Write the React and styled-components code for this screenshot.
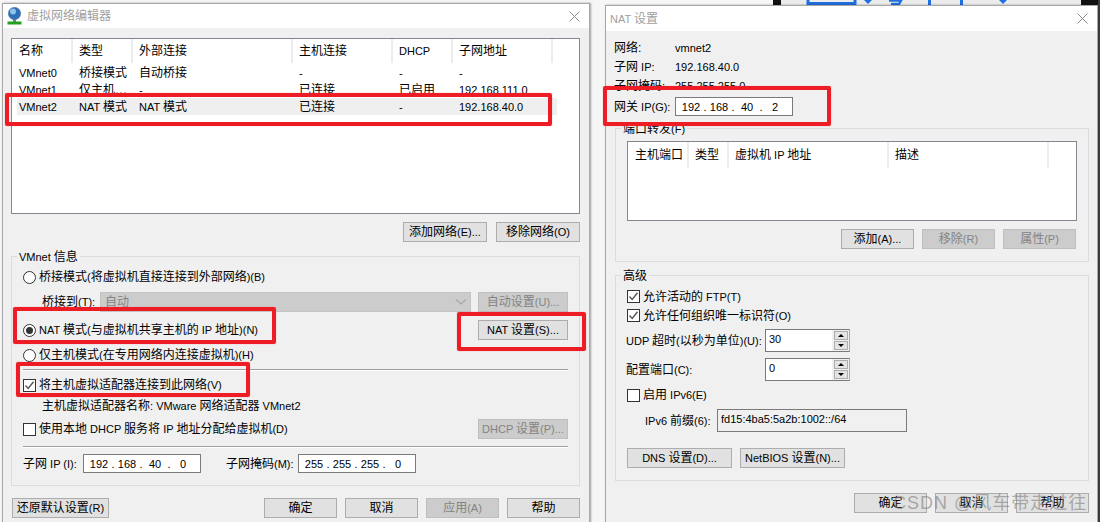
import React from 'react';
import styled, { createGlobalStyle } from 'styled-components';

const GlobalStyle = createGlobalStyle`
  html, body {
    margin: 0;
    padding: 0;
    background: #f4f4f4;
  }
  * {
    box-sizing: border-box;
  }
`;

const Desktop = styled.div`
  position: relative;
  width: 1100px;
  height: 522px;
  overflow: hidden;
  background: #f6f6f6;
  color: #000;
  font: 12px/16px "Liberation Sans", "Noto Sans CJK SC", sans-serif;
`;

// the dialogs set latin text a size below the chinese text
const Latin = styled.span`
  font-size: 11px;
`;

const T = ({ children }) => (
  <>
    {children.split(/([\x20-\x7e]+)/).map((run, i) => (
      i % 2 ? <Latin key={i}>{run}</Latin> : run
    ))}
  </>
);

const TopStrip = styled.svg`
  position: absolute;
  left: 773px;
  top: 0;
`;

const RightEdge = styled.div`
  position: absolute;
  left: 1098px;
  top: 0;
  width: 2px;
  height: 522px;
  background: #3a3a3a;
`;

const Window = styled.div`
  position: absolute;
  left: ${(p) => p.$left}px;
  top: ${(p) => p.$top}px;
  width: ${(p) => p.$width}px;
  height: ${(p) => p.$height}px;
  display: flex;
  flex-direction: column;
  background: #f0f0f0;
  border: 1px solid #a8a8a8;
  box-shadow: 1px 0 2px rgba(0, 0, 0, 0.35);
`;

const TitleBar = styled.div`
  display: flex;
  align-items: center;
  flex: none;
  height: ${(p) => p.$height}px;
  padding: 0 9px 0 ${(p) => p.$pad}px;
  background: #fff;
`;

const TitleText = styled.span`
  flex: 1;
  color: #a0a0a0;
  margin-left: ${(p) => p.$gap || 0}px;
`;

const WindowBody = styled.div`
  display: flex;
  flex-direction: column;
  padding: ${(p) => p.$pad};
`;

const ListBox = styled.div`
  height: ${(p) => p.$height}px;
  flex: none;
  background: #fff;
  border: 1px solid #828790;
`;

const ListRow = styled.div`
  display: grid;
  grid-template-columns: ${(p) => p.$cols};
  align-items: center;
`;

const HeaderRow = styled(ListRow)`
  height: ${(p) => p.$h}px;
  margin-bottom: 1px;
`;

const HeaderCell = styled.div`
  height: 100%;
  line-height: ${(p) => p.$line || 24}px;
  padding-left: ${(p) => p.$pad || 6}px;
  border-right: 2px solid #ececec;
  white-space: nowrap;
`;

const DataRow = styled(ListRow)`
  height: 17px;
  width: 540px;
  margin-left: 5px;
  background: ${(p) => (p.$selected ? '#efefef' : 'transparent')};
`;

const DataCell = styled.div`
  padding-left: ${(p) => p.$pad || 6}px;
  white-space: nowrap;
`;

const Button = styled.button`
  flex: none;
  width: ${(p) => p.$w}px;
  height: 20px;
  padding: 0;
  font: inherit;
  color: ${(p) => (p.disabled ? '#838383' : '#000')};
  background: ${(p) => (p.disabled ? '#cccccc' : '#e1e1e1')};
  border: 1px solid ${(p) => (p.disabled ? '#bfbfbf' : '#adadad')};
`;

const ButtonRow = styled.div`
  display: flex;
  flex: none;
  justify-content: ${(p) => p.$justify || 'flex-end'};
  gap: ${(p) => p.$gap || 8}px;
  margin-top: ${(p) => p.$top || 0}px;
  padding-right: ${(p) => p.$right || 0}px;
  padding-left: ${(p) => p.$left || 0}px;
`;

const ButtonGroup = styled.div`
  display: flex;
  gap: 8px;
`;

const Group = styled.div`
  position: relative;
  flex: none;
  display: flex;
  flex-direction: column;
  height: ${(p) => p.$height}px;
  margin: ${(p) => p.$margin || '0'};
  padding: ${(p) => p.$pad};
  border: 1px solid #dcdcdc;
`;

const Legend = styled.span`
  position: absolute;
  left: 5px;
  top: -8px;
  padding: 0 2px;
  background: #f0f0f0;
`;

const FormRow = styled.div`
  display: flex;
  align-items: center;
  flex: none;
  height: ${(p) => p.$h || 20}px;
  margin-top: ${(p) => p.$top || 0}px;
  padding-left: ${(p) => p.$indent || 0}px;
  white-space: pre;
`;

const Spacer = styled.div`
  flex: 1;
`;

const Radio = styled.span`
  flex: none;
  display: flex;
  align-items: center;
  justify-content: center;
  width: 13px;
  height: 13px;
  margin-right: 3px;
  background: #fff;
  border: 1px solid #333;
  border-radius: 50%;
  &::after {
    content: '';
    display: ${(p) => (p.$on ? 'block' : 'none')};
    width: 7px;
    height: 7px;
    border-radius: 50%;
    background: #333;
  }
`;

const CheckFrame = styled.span`
  flex: none;
  display: flex;
  width: 13px;
  height: 13px;
  margin-right: 3px;
  background: #fff;
  border: 1px solid #333;
`;

const Check = ({ on }) => (
  <CheckFrame>
    {on && (
      <svg width="11" height="11" viewBox="0 0 11 11">
        <path d="M1.5 5.5 L4.2 8.5 L9.5 1.8" fill="none" stroke="#555" strokeWidth="1.4" />
      </svg>
    )}
  </CheckFrame>
);

const Combo = styled.div`
  flex: none;
  display: flex;
  align-items: center;
  justify-content: space-between;
  width: 371px;
  height: 20px;
  margin-right: 7px;
  padding: 0 3px 0 4px;
  color: #838383;
  background: #cccccc;
  border: 1px solid #c4c4c4;
`;

const Divider = styled.div`
  flex: none;
  height: 2px;
  margin-top: ${(p) => p.$top}px;
  background: #a0a0a0;
  border-bottom: 1px solid #fff;
`;

const IpBox = styled.div`
  flex: none;
  display: flex;
  align-items: center;
  width: 118px;
  height: 19px;
  padding-left: 3px;
  font-size: 11px;
  background: #fff;
  border: 1px solid #7a7a7a;
`;

const Octet = styled.span`
  width: 24px;
  text-align: center;
`;

const Dot = styled.span`
  width: 4px;
  text-align: center;
`;

const IpField = ({ value }) => (
  <IpBox>
    {value.map((part, i) => (
      <React.Fragment key={i}>
        <Octet>{part}</Octet>
        {i < 3 && <Dot>.</Dot>}
      </React.Fragment>
    ))}
  </IpBox>
);

const FixedLabel = styled.span`
  flex: none;
  width: ${(p) => p.$w}px;
  margin-left: ${(p) => p.$left || 0}px;
  white-space: pre;
`;

const SpinBox = styled.div`
  flex: none;
  display: flex;
  width: 85px;
  height: 23px;
  background: #fff;
  border: 1px solid #7a7a7a;
  border-right-color: #adadad;
  padding-left: 3px;
  font-size: 11px;
  line-height: 18px;
`;

const SpinValue = styled.span`
  flex: 1;
`;

const SpinButtons = styled.div`
  flex: none;
  display: flex;
  flex-direction: column;
  justify-content: space-between;
  width: 17px;
  padding: 1px 1px 1px 2px;
  background: #f0f0f0;
`;

const SpinButton = styled.span`
  display: flex;
  align-items: center;
  justify-content: center;
  height: 9px;
  background: #e4e4e4;
  border: 1px solid #adadad;
  &::after {
    content: '';
    border-left: 3px solid transparent;
    border-right: 3px solid transparent;
    ${(p) => (p.$up ? 'border-bottom' : 'border-top')}: 3px solid #000;
  }
`;

const Spin = ({ value }) => (
  <SpinBox>
    <SpinValue>{value}</SpinValue>
    <SpinButtons>
      <SpinButton $up />
      <SpinButton />
    </SpinButtons>
  </SpinBox>
);

const PrefixBox = styled.div`
  flex: none;
  width: 190px;
  height: 23px;
  padding-left: 3px;
  line-height: 19px;
  background: #f0f0f0;
  border: 1px solid #7a7a7a;
`;

const Marker = styled.div`
  position: absolute;
  left: ${(p) => p.$x}px;
  top: ${(p) => p.$y}px;
  width: ${(p) => p.$w}px;
  height: ${(p) => p.$h}px;
  border: 4px solid #ee1c25;
  border-radius: 2px;
  box-shadow: 0 0 1px rgba(238, 28, 37, 0.6);
`;

const Watermark = styled.div`
  position: absolute;
  left: 893px;
  top: 492px;
  font-size: 18px;
  line-height: 22px;
  letter-spacing: 1px;
  color: rgba(125, 125, 125, 0.6);
  white-space: nowrap;
`;

const CloseIcon = () => (
  <svg width="11" height="11" viewBox="0 0 11 11">
    <path d="M0.5 0.5 L10.5 10.5 M10.5 0.5 L0.5 10.5" stroke="#8a8a8a" strokeWidth="1" />
  </svg>
);

const NetworkIcon = () => (
  <svg width="15" height="18" viewBox="0 0 15 18">
    <rect x="6" y="12" width="3" height="3" fill="#6d8a6d" />
    <rect x="0.5" y="14.5" width="14" height="3" fill="#1fa01f" />
    <circle cx="7.5" cy="6.5" r="6.2" fill="#2f6fb8" stroke="#5c7f9c" strokeWidth="0.6" />
    <circle cx="6" cy="4.5" r="3" fill="#8fc3ee" />
  </svg>
);

const headCols = '61px 60px 160px 100px 60px 100px';
const rowCols = '56px 60px 160px 100px 60px 100px';
const portCols = '61px 40px 160px 160px 30px';

const networks = [
  { id: 'VMnet0', type: '桥接模式', ext: '自动桥接', host: '-', dhcp: '-', subnet: '-' },
  { id: 'VMnet1', type: '仅主机…', ext: '-', host: '已连接', dhcp: '已启用', subnet: '192.168.111.0' },
  { id: 'VMnet2', type: 'NAT 模式', ext: 'NAT 模式', host: '已连接', dhcp: '-', subnet: '192.168.40.0', selected: true },
];

const NetworkEditor = () => (
  <Window $left={2} $top={3} $width={588} $height={530}>
    <TitleBar $height={24} $pad={4}>
      <NetworkIcon />
      <TitleText $gap={5}>虚拟网络编辑器</TitleText>
      <CloseIcon />
    </TitleBar>
    <WindowBody $pad="10px 9px 0 8px">
      <ListBox $height={176}>
        <HeaderRow $cols={headCols} $h={24}>
          <HeaderCell $pad={7}>名称</HeaderCell>
          <HeaderCell>类型</HeaderCell>
          <HeaderCell>外部连接</HeaderCell>
          <HeaderCell>主机连接</HeaderCell>
          <HeaderCell><T>DHCP</T></HeaderCell>
          <HeaderCell>子网地址</HeaderCell>
        </HeaderRow>
        {networks.map((n) => (
          <DataRow key={n.id} $cols={rowCols} $selected={n.selected}>
            <DataCell $pad={2}><T>{n.id}</T></DataCell>
            <DataCell><T>{n.type}</T></DataCell>
            <DataCell><T>{n.ext}</T></DataCell>
            <DataCell><T>{n.host}</T></DataCell>
            <DataCell><T>{n.dhcp}</T></DataCell>
            <DataCell><T>{n.subnet}</T></DataCell>
          </DataRow>
        ))}
      </ListBox>
      <ButtonRow $top={8} $gap={9}>
        <Button $w={84}><T>添加网络(E)...</T></Button>
        <Button $w={84}><T>移除网络(O)</T></Button>
      </ButtonRow>
      <Group $height={230} $margin="14px 0 0" $pad="10px 11px 0 11px">
        <Legend><T>VMnet 信息</T></Legend>
        <FormRow>
          <Radio />
          <T>桥接模式(将虚拟机直接连接到外部网络)(B)</T>
        </FormRow>
        <FormRow $top={5} $indent={19}>
          <FixedLabel $w={58}><T>桥接到(T):</T></FixedLabel>
          <Combo>
            自动
            <svg width="12" height="8" viewBox="0 0 12 8">
              <path d="M1 1.5 L6 6 L11 1.5" fill="none" stroke="#a8a8a8" strokeWidth="1.2" />
            </svg>
          </Combo>
          <Button $w={90} disabled><T>自动设置(U)...</T></Button>
        </FormRow>
        <FormRow $top={8}>
          <Radio $on />
          <T>NAT 模式(与虚拟机共享主机的 IP 地址)(N)</T>
          <Spacer />
          <Button $w={90}><T>NAT 设置(S)...</T></Button>
        </FormRow>
        <FormRow $top={5}>
          <Radio />
          <T>仅主机模式(在专用网络内连接虚拟机)(H)</T>
        </FormRow>
        <Divider $top={4} />
        <FormRow $top={4}>
          <Check on />
          <T>将主机虚拟适配器连接到此网络(V)</T>
        </FormRow>
        <FormRow $top={1} $indent={19}>
          <T>主机虚拟适配器名称: VMware 网络适配器 VMnet2</T>
        </FormRow>
        <FormRow $top={3}>
          <Check />
          <T>使用本地 DHCP 服务将 IP 地址分配给虚拟机(D)</T>
          <Spacer />
          <Button $w={90} disabled><T>DHCP 设置(P)...</T></Button>
        </FormRow>
        <Divider $top={7} />
        <FormRow $top={6} $h={19}>
          <FixedLabel $w={60}><T>子网 IP (I):</T></FixedLabel>
          <IpField value={['192', '168', '40', '0']} />
          <FixedLabel $w={72} $left={25}><T>子网掩码(M):</T></FixedLabel>
          <IpField value={['255', '255', '255', '0']} />
        </FormRow>
      </Group>
      <ButtonRow $top={12} $justify="space-between" $left={1}>
        <Button $w={97}><T>还原默认设置(R)</T></Button>
        <ButtonGroup>
          <Button $w={73}>确定</Button>
          <Button $w={73}>取消</Button>
          <Button $w={73} disabled><T>应用(A)</T></Button>
          <Button $w={73}>帮助</Button>
        </ButtonGroup>
      </ButtonRow>
    </WindowBody>
  </Window>
);

const NatSettings = () => (
  <Window $left={605} $top={5} $width={493} $height={530}>
    <TitleBar $height={25} $pad={4}>
      <TitleText><T>NAT 设置</T></TitleText>
      <CloseIcon />
    </TitleBar>
    <WindowBody $pad="7px 8px 0 8px">
      <FormRow $h={19}>
        <FixedLabel $w={61}>网络:</FixedLabel>
        <T>vmnet2</T>
      </FormRow>
      <FormRow $h={19}>
        <FixedLabel $w={61}><T>子网 IP:</T></FixedLabel>
        <T>192.168.40.0</T>
      </FormRow>
      <FormRow $h={19}>
        <FixedLabel $w={61}><T>子网掩码:</T></FixedLabel>
        <T>255.255.255.0</T>
      </FormRow>
      <FormRow $h={19} $top={2}>
        <FixedLabel $w={61}><T>网关 IP(G):</T></FixedLabel>
        <IpField value={['192', '168', '40', '2']} />
      </FormRow>
      <Group $height={134} $margin="12px 0 0 1px" $pad="12px 11px 0 11px">
        <Legend><T>端口转发(F)</T></Legend>
        <ListBox $height={80}>
          <HeaderRow $cols={portCols} $h={25}>
            <HeaderCell $pad={7} $line={26}>主机端口</HeaderCell>
            <HeaderCell $line={26}>类型</HeaderCell>
            <HeaderCell $line={26}><T>虚拟机 IP 地址</T></HeaderCell>
            <HeaderCell $line={26}>描述</HeaderCell>
          </HeaderRow>
        </ListBox>
        <ButtonRow $top={8} $right={1}>
          <Button $w={73}><T>添加(A)...</T></Button>
          <Button $w={73} disabled><T>移除(R)</T></Button>
          <Button $w={73} disabled><T>属性(P)</T></Button>
        </ButtonRow>
      </Group>
      <Group $height={206} $margin="13px 0 0 1px" $pad="11px 11px 0 11px">
        <Legend>高级</Legend>
        <FormRow $h={19}>
          <Check on />
          <T>允许活动的 FTP(T)</T>
        </FormRow>
        <FormRow $h={19}>
          <Check on />
          <T>允许任何组织唯一标识符(O)</T>
        </FormRow>
        <FormRow $h={23} $top={4}>
          <FixedLabel $w={139} $left={-1}><T>UDP 超时(以秒为单位)(U):</T></FixedLabel>
          <Spin value="30" />
        </FormRow>
        <FormRow $h={23} $top={6}>
          <FixedLabel $w={139} $left={-1}><T>配置端口(C):</T></FixedLabel>
          <Spin value="0" />
        </FormRow>
        <FormRow $top={4}>
          <Check />
          <T>启用 IPv6(E)</T>
        </FormRow>
        <FormRow $h={23} $top={4} $indent={18}>
          <FixedLabel $w={72}><T>IPv6 前缀(6):</T></FixedLabel>
          <PrefixBox><T>fd15:4ba5:5a2b:1002::/64</T></PrefixBox>
        </FormRow>
        <ButtonRow $top={16} $justify="flex-start">
          <Button $w={105}><T>DNS 设置(D)...</T></Button>
          <Button $w={105}><T>NetBIOS 设置(N)...</T></Button>
        </ButtonRow>
      </Group>
      <ButtonRow $top={12}>
        <Button $w={73}>确定</Button>
        <Button $w={73}>取消</Button>
        <Button $w={73}>帮助</Button>
      </ButtonRow>
    </WindowBody>
  </Window>
);

const App = () => (
  <Desktop>
    <GlobalStyle />
    <TopStrip width="327" height="5" viewBox="0 0 327 5">
      <rect x="0" width="8" height="5" fill="#111" />
      <rect x="8" width="300" height="5" fill="#ececec" />
      <rect x="308" width="19" height="5" fill="#111" />
      <path d="M35 0 V3.5 H82 V0" fill="none" stroke="#1e6fe0" strokeWidth="3" />
      <path d="M91 0 L95 4 L99 0 Z" fill="#1e6fe0" />
      <path d="M116 0.5 H128 L126 4 H118" fill="none" stroke="#1e6fe0" strokeWidth="2.5" />
      <rect x="155" width="3" height="5" fill="#1e6fe0" />
      <rect x="187" width="3" height="5" fill="#1e6fe0" />
      <path d="M226 0 L230 4 L234 0 Z" fill="#1e6fe0" />
    </TopStrip>
    <NetworkEditor />
    <NatSettings />
    <RightEdge />
    <Marker $x={5} $y={93} $w={547} $h={33} />
    <Marker $x={13} $y={307} $w={263} $h={37} />
    <Marker $x={457} $y={312} $w={129} $h={39} />
    <Marker $x={16} $y={362} $w={234} $h={35} />
    <Marker $x={603} $y={86} $w={228} $h={40} />
    <Watermark>CSDN @风车带走过往</Watermark>
  </Desktop>
);

export default App;
